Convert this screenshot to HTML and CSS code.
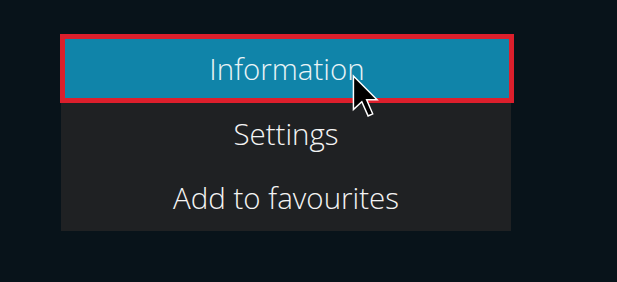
FILE: index.html
```html
<!DOCTYPE html>
<html>
<head>
<meta charset="utf-8">
<link rel="stylesheet" href="styles.css">
</head>
<body>
<div class="stage">
  <div class="menu">
    <div class="item item-focused">Information</div>
    <div class="item">Settings</div>
    <div class="item">Add to favourites</div>
  </div>
  <svg class="cursor" width="30" height="44" viewBox="-1 -1 14 21">
    <path d="M0 0 L0 16 L4 12.2 L7 19 L9.2 18 L6.3 11.3 L11.3 11.3 Z" fill="#000" stroke="#fff" stroke-width="0.7" stroke-linejoin="miter"/>
  </svg>
</div>
</body>
</html>
```
FILE: styles.css
```css
html, body {
  margin: 0;
  padding: 0;
}
body {
  width: 617px;
  height: 282px;
  overflow: hidden;
  background: #08131a;
  font-family: "Open Sans", "Noto Sans", sans-serif;
}
.stage {
  position: relative;
  width: 617px;
  height: 282px;
  padding-top: 39px;
  box-sizing: border-box;
}
.menu {
  margin-left: 61px;
  width: 450px;
  background: #1f2123;
  display: flex;
  flex-direction: column;
}
.item {
  height: 64px;
  display: flex;
  align-items: center;
  justify-content: center;
  color: #f4f4f4;
  font-size: 29.5px;
  font-weight: 300;
  padding-bottom: 4px;
  box-sizing: border-box;
}
.item-focused {
  height: 69px;
  margin: -5px -3px 0 -1px;
  border: 5px solid #dc1f2c;
  background: #1084a9;
  color: #eaf4f7;
  padding-bottom: 1px;
}
.cursor {
  position: absolute;
  left: 351px;
  top: 74px;
}
```
